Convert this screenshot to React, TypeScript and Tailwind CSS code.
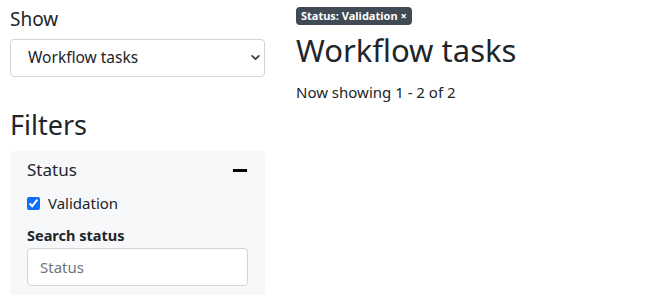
import { useState } from "react";

const font = { fontFamily: '"Noto Sans", "Open Sans", sans-serif' };

export default function App() {
  const [checked, setChecked] = useState(true);

  return (
    <div className="flex gap-[31px] px-[10px] text-[#212529]" style={font}>
      {/* Sidebar */}
      <aside className="w-[255px] shrink-0">
        <label className="block pt-[5px] text-[19px] leading-[28px]">Show</label>
        <div className="relative mt-[6px]">
          <select className="w-full h-[38px] appearance-none rounded border border-[#ced4da] bg-white pl-[17px] pr-8 text-[15.5px] text-[#212529]">
            <option>Workflow tasks</option>
          </select>
          <svg
            className="pointer-events-none absolute right-[5px] top-[15px] w-[9px] h-[7px]"
            viewBox="0 0 16 12"
            fill="none"
            stroke="#343a40"
            strokeWidth={3}
            strokeLinecap="round"
            strokeLinejoin="round"
          >
            <path d="M2 3l6 6 6-6" />
          </svg>
        </div>

        <h2 className="mt-[28px] text-[27px] leading-[40px]">Filters</h2>

        <div className="mt-[6px] rounded bg-[#f7f8f9] px-[17px] pt-[7px] pb-[9px]">
          <div className="flex items-center justify-between">
            <span className="text-[17px] leading-[24px]">Status</span>
            <span className="mr-[1px] block h-[3px] w-[14px] bg-black" />
          </div>
          <label className="mt-[11px] flex items-center gap-[8px] text-[15px] leading-[20px]">
            <input
              type="checkbox"
              checked={checked}
              onChange={() => setChecked(!checked)}
              className="h-[13px] w-[13px] accent-[#0d6efd]"
            />
            Validation
          </label>
          <div className="mt-[12px] text-[14.5px] font-bold leading-[20px]">Search status</div>
          <input
            placeholder="Status"
            className="mt-[3px] h-[38px] w-full rounded border border-[#ced4da] bg-white px-[12px] text-[15px] placeholder:text-[#6c757d]"
          />
        </div>
      </aside>

      {/* Main */}
      <main className="flex-1 pt-[7px]">
        <div className="flex">
          <span className="flex items-center gap-[3px] rounded bg-[#3f4a54] px-[5px] h-[18px] text-[11px] font-bold text-white">
            Status: Validation <span className="text-[11px]">×</span>
          </span>
        </div>
        <h1 className="mt-[5px] text-[31px] leading-[40px]">Workflow tasks</h1>
        <p className="mt-[10px] text-[15px] leading-[24px]">Now showing 1 - 2 of 2</p>
      </main>
    </div>
  );
}
